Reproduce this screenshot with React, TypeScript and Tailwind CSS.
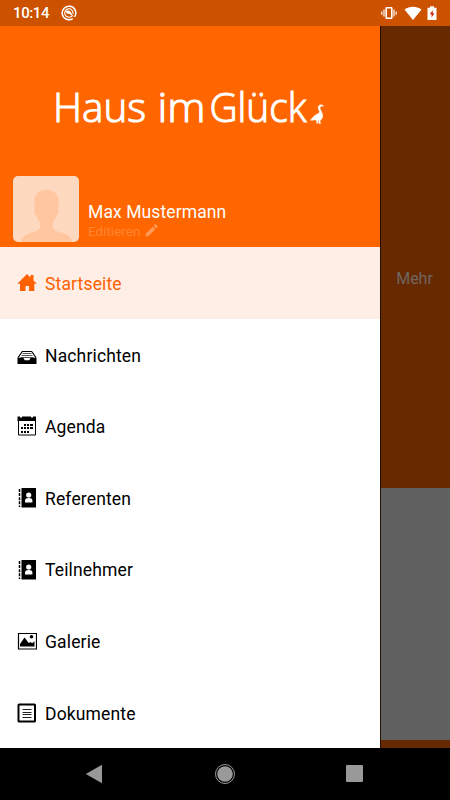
import type { ReactNode } from "react";
import { clsx } from "clsx";

const HomeIcon = () => (
  <svg className="h-5 w-5" viewBox="0 0 20 20" fill="currentColor">
    <path d="M10 1 13.5 4.500V2h3v5.500L19.800 10.800H17.300v7.200h-5.300v-5H8.500v5H3v-7.200H.3z" />
  </svg>
);

const InboxIcon = () => (
  <svg className="h-5 w-5" viewBox="0 0 20 20" fill="none">
    <path d="M1 12.600 5.300 6.500h9.400L19 12.600" stroke="#000" strokeWidth="1.1" />
    <path d="M5.500 8.500h9M4.500 10.500h11M3.500 12.500h13" stroke="#555" strokeWidth="1" />
    <path d="M.5 12.800h5.800l1.500 2.400h4.400l1.500-2.400h5.800v6.200H.5z" fill="#000" />
  </svg>
);

const CalendarIcon = () => (
  <svg className="h-5 w-5" viewBox="0 0 20 20" fill="#000">
    <path d="M.5.5h2.500v1h2v-1h9v1h2v-1h3V5H.5z" />
    <path d="M1.500 4v15h17V4" fill="none" stroke="#000" />
    <path d="M7 8h2v2H7zM10 8h2v2h-2zM13 8h3v2h-3zM4 11h2v2H4zM7 11h2v2H7zM10 11h2v2h-2zM13 11h3v2h-3zM4 15h2v2H4zM7 15h2v2H7zM10 15h2v2h-2z" />
  </svg>
);

const ContactsIcon = () => (
  <svg className="h-5 w-5" viewBox="0 0 20 20">
    <path d="M4.500 0H19v19.500H4.500z" />
    <path d="M2.500 1v18" stroke="#000" strokeWidth="1.5" strokeDasharray="3 1.1" />
    <circle cx="11.700" cy="7" r="2.600" fill="#fff" />
    <path d="M8 14.600v-2c0-1.800 1.400-2.600 3.700-2.600s3.700.8 3.700 2.600v2z" fill="#fff" />
  </svg>
);

const PictureIcon = () => (
  <svg className="h-5 w-5" viewBox="0 0 20 20">
    <path d="M1.500 2.500h18v15.500h-18z" fill="none" stroke="#000" strokeWidth="1.2" />
    <path d="M3 15.500v-2.500L7.500 6.500l4.200 5.500 2-1 1.500 1.300 2.300-2v5.200z" />
    <circle cx="14.500" cy="5.800" r="1.800" />
  </svg>
);

const DocumentIcon = () => (
  <svg className="h-5 w-5" viewBox="0 0 20 20" fill="none" stroke="#000">
    <rect x="1.500" y="1.500" width="16.500" height="17" rx=".6" strokeWidth="2" />
    <path d="M5.500 6.500h9M5.500 9.500h9M5.500 11.500h9M5.500 14.500h9" strokeWidth="1" stroke="#222" />
  </svg>
);

const menu: { label: string; icon: ReactNode; active?: boolean }[] = [
  { label: "Startseite", icon: <HomeIcon />, active: true },
  { label: "Nachrichten", icon: <InboxIcon /> },
  { label: "Agenda", icon: <CalendarIcon /> },
  { label: "Referenten", icon: <ContactsIcon /> },
  { label: "Teilnehmer", icon: <ContactsIcon /> },
  { label: "Galerie", icon: <PictureIcon /> },
  { label: "Dokumente", icon: <DocumentIcon /> },
];

const StatusBar = () => (
  <div className="flex h-[26px] shrink-0 items-center bg-[#cc5200] pr-[13px] pl-[13px] text-white">
    <span className="w-[36px] pt-px text-[15px] leading-none font-medium tracking-[-0.4px]">10:14</span>
    <svg className="ml-[12px] h-4 w-4" viewBox="0 0 16 16" fill="none" stroke="#fff">
      <path d="M13.600 11.800A6.800 6.800 0 1 0 11.800 13.600" strokeWidth="1.500" />
      <path d="M11 10.800a4.200 4.200 0 1 1 1-2" strokeWidth="1.100" />
      <path d="M4.600 6.600c1.500-1.600 3.600-1.400 5 .1l3.400 5.500-4.300-3.300c-1.800.6-3.500-.3-4.100-2.300z" fill="#fff" stroke="none" />
    </svg>
    <svg className="ml-auto h-4 w-4" viewBox="0 0 16 16" fill="none" stroke="#fff">
      <rect x="5.200" y="2.800" width="5.600" height="10.400" rx=".5" strokeWidth="1.600" />
      <path d="M3 4.500v7M13 4.500v7M.8 6.400v3.400M15.200 6.400v3.400" strokeWidth="1.200" />
    </svg>
    <svg className="ml-[7px] h-4 w-[18px]" viewBox="0 0 18 16" fill="#fff">
      <path d="M.5 4.500C5.500.7 12.500.7 17.500 4.500L9 15z" />
    </svg>
    <svg className="ml-[5px] h-4 w-[10px]" viewBox="0 0 10 16">
      <path d="M3 1.200h4v1.600h2.500v12.200H.5v-12.200H3z" fill="#fff" />
      <path d="M5.700 5.200 2.800 9.300h1.800v3.200l2.800-4.300H5.700z" fill="#cc2200" />
    </svg>
  </div>
);

const Logo = () => (
  <svg
    className="mt-[34px] ml-[50px] h-[86px] w-[280px] shrink-0"
    viewBox="50 60 280 86"
    fill="#fff"
    fontFamily="'Open Sans', 'Noto Sans', sans-serif"
    fontSize="41"
    fontWeight="300"
  >
    <g stroke="#fff" strokeWidth="1.1">
      <text x="53" y="121.500" textLength="93" lengthAdjust="spacingAndGlyphs">Haus</text>
      <text x="157.500" y="121.500" textLength="48" lengthAdjust="spacingAndGlyphs">im</text>
      <text x="209.500" y="121.500" textLength="97" lengthAdjust="spacingAndGlyphs">Glück</text>
    </g>
    <path d="M323.500 106.200c-.8-1.900-4.500-2-5.300.5-.7 2.600 2.500 4.600.8 6.300-1.600 1.300-4.100 1.200-8.500 7.200 1.700.3 3 .1 4.100-.4l2.200 1v1.500l-1 .7h2.200v-2.500h1v2.200l-.5.7h2.500l-.8-.8v-2.300c2.700-1.400 3.100-4.800 1.800-7.500-.8-2-2.100-4-1.800-5.600.4-1.400 1.800-1 3.300-1z" stroke="#fff" strokeWidth=".4" />
  </svg>
);

const Avatar = () => (
  <svg className="h-[66px] w-[66px] shrink-0 rounded-[5px]" viewBox="0 0 66 66">
    <path d="M0 0h66v66H0z" fill="#ffd8c0" />
    <path
      d="M33 14c-8 0-12.200 5-11.600 12l.4 6.800c-1.200 1-.3 5.700 1.400 6.400.8 3 2.300 5.300 4.100 7.100v5.300c-2.300 4-7.200 4.400-11.800 6.100C11 59.300 8.500 62 8 66h51c-.5-4-3-6.700-7.500-8.300-4.600-1.700-9.500-2.100-11.800-6.100v-5.300c1.800-1.800 3.300-4.100 4.100-7.100 1.700-.7 2.600-5.400 1.400-6.400l.4-6.800C46.200 19 42 14 33 14z"
      fill="#ffc6a0"
    />
  </svg>
);

const Drawer = () => (
  <aside className="flex w-[380px] shrink-0 flex-col bg-white">
    <header className="flex h-[221px] shrink-0 flex-col bg-[#ff6600]">
      <Logo />
      <div className="mt-auto mb-[5px] ml-[13px] flex items-end">
        <Avatar />
        <div className="mb-px ml-[9px]">
          <div className="text-[17.5px] leading-5 tracking-[0.1px] whitespace-nowrap text-white">Max Mustermann</div>
          <div className="flex items-center pb-px text-[13.5px] leading-[18px] text-[#ff8533]">
            Editieren
            <svg className="mb-[2px] ml-[5px] h-[13px] w-[13px]" viewBox="0 0 14 14" fill="#ff9a57">
              <path d="M.8 13.200V10.400l7.500-7.500 2.800 2.800-7.500 7.500zM9.200 2l1.400-1.400c.4-.4.900-.4 1.300 0l1.500 1.500c.4.4.4.900 0 1.300L12 4.800z" />
            </svg>
          </div>
        </div>
      </div>
    </header>
    <nav className="grid min-h-0 flex-1 grid-rows-7">
      {menu.map((item) => (
        <a
          key={item.label}
          className={clsx(
            "flex items-center gap-[8px] pt-px pl-[17px] text-[17.5px] tracking-[0.15px]",
            item.active ? "bg-[#ffeee6] text-[#ff6000]" : "text-black",
          )}
        >
          {item.icon}
          <span className="pt-[2px]">{item.label}</span>
        </a>
      ))}
    </nav>
  </aside>
);

export default function App() {
  return (
    <div className="flex h-[800px] w-[450px] flex-col overflow-hidden bg-black font-['Roboto',sans-serif]">
      <StatusBar />
      <div className="flex h-[722px] shrink-0">
        <Drawer />
        <main className="flex flex-1 flex-col border-l border-[#241000] bg-[#616161]">
          <div className="flex h-[462px] justify-center bg-[#662900] pt-[243px] pr-[2px] text-[16px] leading-5 text-[#706660]">
            Mehr
          </div>
          <div className="mt-auto h-[8px] bg-[#662900]" />
        </main>
      </div>
      <div className="flex flex-1 items-center pb-px">
        <svg className="ml-[85px] h-5 w-[18px]" viewBox="0 0 18 20" fill="#999">
          <path d="M.8 10 17 .8v18.400z" />
        </svg>
        <svg className="ml-[111px] h-[22px] w-[22px]" viewBox="0 0 22 22">
          <circle cx="11" cy="11" r="9.500" fill="none" stroke="#999" />
          <circle cx="11" cy="11" r="7.800" fill="#999" />
        </svg>
        <div className="ml-[110px] h-[17px] w-[17px] rounded-[1px] bg-[#999]" />
      </div>
    </div>
  );
}
